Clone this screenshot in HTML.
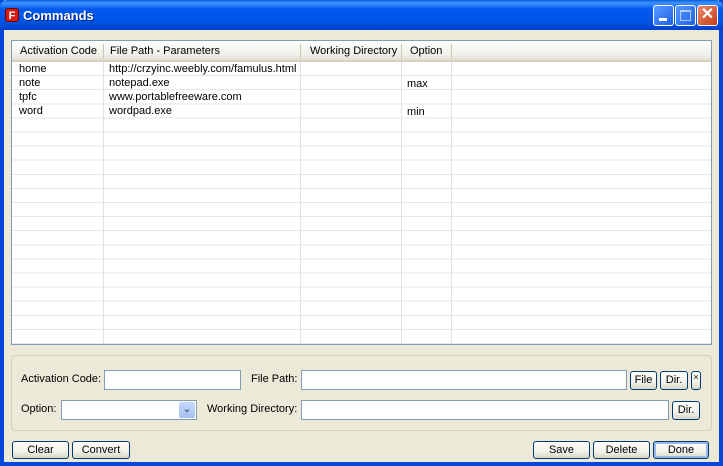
<!DOCTYPE html><html><head><style>
*{box-sizing:border-box;margin:0;padding:0}
body{width:723px;height:466px;overflow:hidden;font-family:Tahoma,"Liberation Sans",sans-serif;font-size:11px;color:#000;background:#ece9d8;position:relative}
.abs{position:absolute}
#title{left:0;top:0;width:723px;height:30px;background:linear-gradient(#0a5fd8 0%,#3d95ff 10%,#0058ee 30%,#0055e5 70%,#0040c8 100%);border-radius:7px 7px 0 0}
#title .t{left:23px;top:8px;color:#fff;font-weight:bold;font-size:13px;font-family:"Liberation Sans",sans-serif;text-shadow:1px 1px #0a1f7a}
.bl{background:#0646d8}
.tb{width:21px;height:21px;top:5px;border:1px solid #fff;border-radius:3px;background:linear-gradient(135deg,#5a9cff,#1b5fe8)}
#list{left:11px;top:40px;width:701px;height:305px;background:#fff;border:1px solid #7f9db9}
.hd{top:0;height:21px;background:linear-gradient(#fff,#f0efe8 70%,#e4e2d6);border-bottom:2px solid #d5d2c2}
.hd span{position:absolute;top:4px}
.vl{width:1px;background:#e3e3e3;top:21px;height:282px}
.c{position:absolute;font-size:11px}
.inp{background:#fff;border:1px solid #7f9db9;height:20px}
.btn{border:1px solid #003c74;border-radius:3px;background:linear-gradient(#fff,#f2f1ea 60%,#d8d6c8);text-align:center;line-height:16px;font-size:11px}
</style></head><body>
<div class="abs bl" style="left:0;top:0;width:4px;height:466px"></div>
<div class="abs bl" style="right:0;top:0;width:4px;height:466px"></div>
<div class="abs bl" style="left:0;bottom:0;width:723px;height:4px"></div>
<div id="title" class="abs">
<div class="abs" style="left:5px;top:8px;width:14px;height:14px;background:#d81a10;border-radius:3px;color:#fff;font-weight:bold;font-size:11px;text-align:center;line-height:14px;border:1px solid #600">F</div>
<div class="abs t">Commands</div>
<div class="abs tb" style="left:653px"><div class="abs" style="left:5px;top:12px;width:8px;height:3px;background:#fff"></div></div>
<div class="abs tb" style="left:675px"><div class="abs" style="left:4px;top:4px;width:11px;height:11px;border:1px solid #fff;border-top-width:2px;opacity:.6"></div></div>
<div class="abs tb" style="left:697px;background:linear-gradient(135deg,#e98a6e,#c63d16);color:#fff;font-size:16px;font-weight:bold;text-align:center;line-height:18px">✕</div>
</div>
<div id="list" class="abs">
<div class="abs hd" style="left:0;width:699px">
<span style="left:8px">Activation Code</span><span style="left:98px">File Path - Parameters</span><span style="left:298px">Working Directory</span><span style="left:398px">Option</span>
<div class="abs" style="left:91px;top:3px;width:1px;height:15px;background:#cbc7b8"></div>
<div class="abs" style="left:288px;top:3px;width:1px;height:15px;background:#cbc7b8"></div>
<div class="abs" style="left:389px;top:3px;width:1px;height:15px;background:#cbc7b8"></div>
<div class="abs" style="left:439px;top:3px;width:1px;height:15px;background:#cbc7b8"></div>
</div>
<div class="abs vl" style="left:91px"></div><div class="abs vl" style="left:288px"></div><div class="abs vl" style="left:389px"></div><div class="abs vl" style="left:439px"></div>
<div class="abs" style="left:0;top:21px;width:699px;height:282px;background:repeating-linear-gradient(transparent 0,transparent 13.1px,#e6e6e6 13.1px,#e6e6e6 14.1px)"></div>
<div class="c" style="left:7px;top:22px">home</div><div class="c" style="left:97px;top:22px">http://crzyinc.weebly.com/famulus.html</div>
<div class="c" style="left:7px;top:36px">note</div><div class="c" style="left:97px;top:36px">notepad.exe</div><div class="c" style="left:395px;top:37px">max</div>
<div class="c" style="left:7px;top:50px">tpfc</div><div class="c" style="left:97px;top:50px">www.portablefreeware.com</div>
<div class="c" style="left:7px;top:64px">word</div><div class="c" style="left:97px;top:64px">wordpad.exe</div><div class="c" style="left:395px;top:65px">min</div>
</div>
<div class="abs" style="left:11px;top:355px;width:701px;height:76px;border:1px solid #d0d0bf;border-radius:4px"></div>
<div class="abs" style="left:21px;top:373px">Activation Code:</div>
<div class="abs inp" style="left:104px;top:370px;width:137px"></div>
<div class="abs" style="left:251px;top:373px">File Path:</div>
<div class="abs inp" style="left:301px;top:370px;width:326px"></div>
<div class="abs btn" style="left:630px;top:371px;width:27px;height:19px">File</div>
<div class="abs btn" style="left:660px;top:371px;width:28px;height:19px">Dir.</div>
<div class="abs btn" style="left:691px;top:371px;width:10px;height:19px;font-size:9px;line-height:10px">×</div>
<div class="abs" style="left:21px;top:403px">Option:</div>
<div class="abs inp" style="left:61px;top:400px;width:136px">
<div class="abs" style="right:1px;top:1px;width:16px;height:16px;background:linear-gradient(#c7d8fb,#a6c0f0);border-radius:2px;color:#4d6185;font-size:10px;text-align:center;line-height:16px;font-weight:bold">⌄</div></div>
<div class="abs" style="left:207px;top:403px">Working Directory:</div>
<div class="abs inp" style="left:301px;top:400px;width:368px"></div>
<div class="abs btn" style="left:672px;top:401px;width:28px;height:19px">Dir.</div>
<div class="abs btn" style="left:12px;top:441px;width:57px;height:18px">Clear</div>
<div class="abs btn" style="left:72px;top:441px;width:58px;height:18px">Convert</div>
<div class="abs btn" style="left:533px;top:441px;width:57px;height:18px">Save</div>
<div class="abs btn" style="left:593px;top:441px;width:57px;height:18px">Delete</div>
<div class="abs btn" style="left:653px;top:441px;width:56px;height:18px;box-shadow:inset 0 0 0 2px #9ab8ee">Done</div>
</body></html>
